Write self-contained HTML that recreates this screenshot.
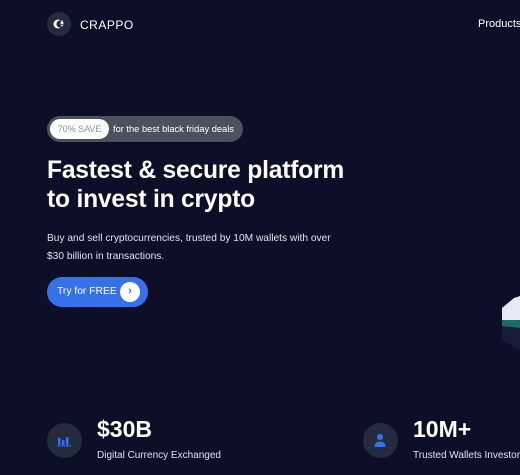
<!DOCTYPE html>
<html><head><meta charset="utf-8"><style>
*{margin:0;padding:0;box-sizing:border-box}
body{width:520px;height:475px;overflow:hidden;background:#0d0f28;font-family:"Liberation Sans",sans-serif;color:#fff;position:relative}
.abs{position:absolute}
</style></head><body>
<svg class="abs" style="left:47px;top:12px" width="24" height="24" viewBox="0 0 24 24"><circle cx="12" cy="12" r="12" fill="#262a3d"/><circle cx="11" cy="12" r="4.5" fill="#fff"/><circle cx="13" cy="12" r="3.6" fill="#262a3d"/><path d="M15 8l1.8 3.3-1.8 1.1-1.8-1.1z M13.2 12.1l1.8 1.1 1.8-1.1-1.8 2.8z" fill="#fff"/></svg>
<div class="abs" style="left:80px;top:18px;font-size:12px;letter-spacing:0.5px">CRAPPO</div>
<div class="abs" style="left:478px;top:18px;font-size:11px">Products</div>
<div class="abs" style="left:47px;top:116px;width:196px;height:26px;border-radius:13px;background:#4a525e"></div>
<div class="abs" style="left:50px;top:119px;width:59px;height:20px;border-radius:10px;background:#fff;color:#8a90a0;font-size:9px;text-align:center;line-height:20px">70% SAVE</div>
<div class="abs" style="left:113px;top:124px;font-size:9.3px;color:#fff">for the best black friday deals</div>
<div class="abs" style="left:47px;top:156px;font-size:24.6px;font-weight:bold;line-height:29px;letter-spacing:-0.2px">Fastest &amp; secure platform<br>to invest in crypto</div>
<div class="abs" style="left:47px;top:230px;font-size:10.2px;line-height:18px;color:#e0e2ea">Buy and sell cryptocurrencies, trusted by 10M wallets with over<br>$30 billion in transactions.</div>
<div class="abs" style="left:47px;top:277px;width:101px;height:30px;border-radius:15px;background:#3671e9"></div>
<div class="abs" style="left:57px;top:286px;font-size:10.3px">Try for FREE</div>
<div class="abs" style="left:120px;top:282px;width:20px;height:20px;border-radius:50%;background:#fff;color:#3671e9;font-size:11px;font-weight:bold;text-align:center;line-height:19px">›</div>
<svg class="abs" style="left:500px;top:290px" width="20" height="70" viewBox="0 0 20 70"><path d="M2 35 L20 25 L20 60 L2 50z" fill="#1c1f3a" opacity=".8"/><path d="M2 24 L20 14 L20 38 L2 36z" fill="#1c6b66"/><path d="M2 18 L14 8 L20 6 L20 30 L2 30z" fill="#e8e9f6"/></svg>
<div class="abs" style="left:47px;top:423px;width:35px;height:35px;border-radius:50%;background:#262a3d"></div>
<svg class="abs" style="left:57px;top:433px" width="15" height="14" viewBox="0 0 15 14"><rect x="1" y="5" width="2.5" height="7" fill="#3671e9"/><rect x="5" y="7" width="2.5" height="5" fill="#3671e9"/><rect x="9" y="4" width="2.5" height="8" fill="#3671e9"/><rect x="0" y="12.5" width="14" height="1" fill="#3671e9"/></svg>
<div class="abs" style="left:97px;top:416px;font-size:23px;font-weight:bold">$30B</div>
<div class="abs" style="left:97px;top:450px;font-size:10px;color:#e0e2ea">Digital Currency Exchanged</div>
<div class="abs" style="left:363px;top:423px;width:35px;height:35px;border-radius:50%;background:#262a3d"></div>
<svg class="abs" style="left:372px;top:432px" width="16" height="16" viewBox="0 0 16 16"><circle cx="8" cy="5" r="3" fill="#3671e9"/><path d="M2.5 15c0-4 2.5-5.5 5.5-5.5s5.5 1.5 5.5 5.5z" fill="#3671e9"/></svg>
<div class="abs" style="left:413px;top:416px;font-size:23px;font-weight:bold">10M+</div>
<div class="abs" style="left:413px;top:450px;font-size:10px;color:#e0e2ea;white-space:nowrap">Trusted Wallets Investor</div>
</body></html>
